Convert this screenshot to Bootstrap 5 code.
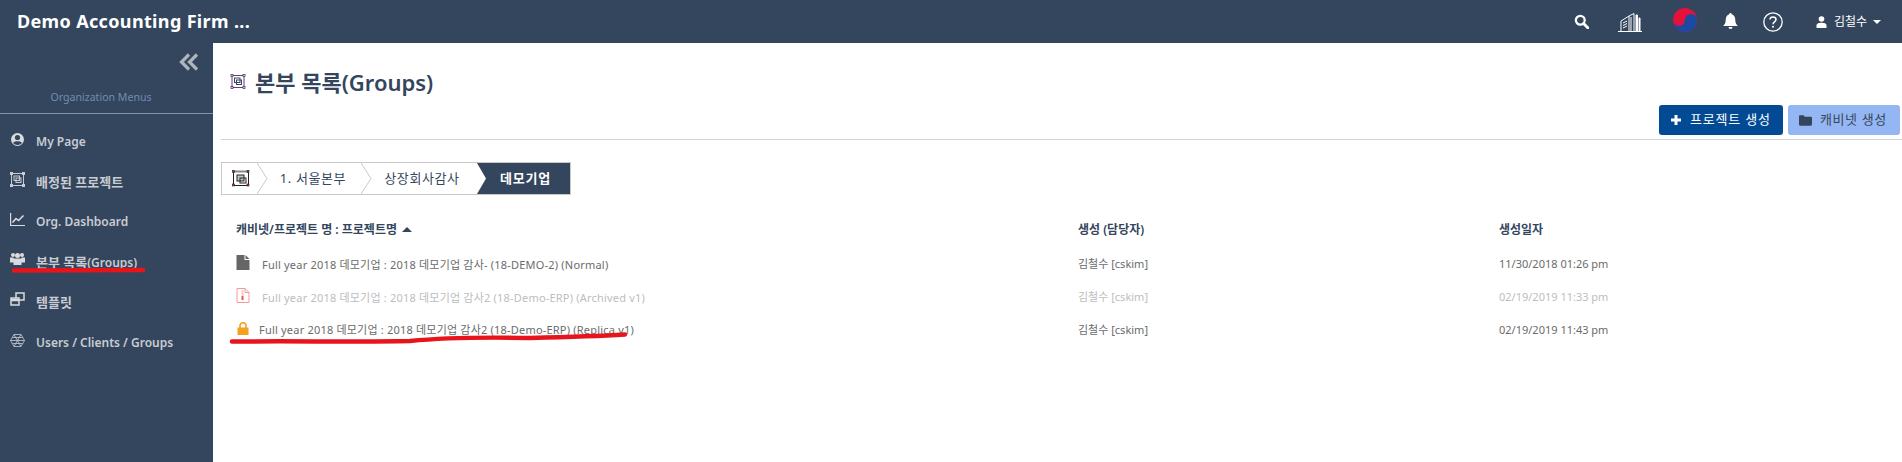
<!DOCTYPE html>
<html lang="ko">
<head>
<meta charset="utf-8">
<title>본부 목록</title>
<link href="https://cdn.jsdelivr.net/npm/bootstrap@5.3.0/dist/css/bootstrap.min.css" rel="stylesheet">
<style>
html,body{height:100%;overflow:hidden}
body{font-family:"Noto Sans","Noto Sans CJK KR",sans-serif;font-size:11px;color:#34465d;background:#fff}
.shell{height:462px;position:relative}
.topbar{height:43px;background:#34465d;color:#fff;padding:0 21px 0 17px}
.brand{font-size:18px;font-weight:700;letter-spacing:.35px}
.tool{display:flex;align-items:center;justify-content:center}
.tool-search{width:16px;margin-right:28px}
.tool-city{width:24px;margin-right:31px}
.tool-flag{width:24px;margin-right:26px;margin-bottom:4px}
.tool-bell{width:16px;margin-right:24px}
.tool-help{width:20px;margin-right:33px}
.user-name{font-size:12px;margin-left:7px}
.caret-down{width:0;height:0;border-left:4.5px solid transparent;border-right:4.5px solid transparent;border-top:4.5px solid #fff;margin-left:6px}
.body-row{height:419px}
.side{width:213px;background:#34465d;flex:none}
.collapse-btn{height:41px;padding:10px 14px 0 0;text-align:right}
.collapse-btn svg{display:block;margin-left:auto}
.menu-title{height:30px;border-bottom:1px solid #8093ad;color:#6f8cb3;font-size:10.6px;text-align:center;padding:6px 11px 0 0}
.side-list{padding-top:8px}
.side-item{height:40.2px;display:flex;align-items:center;color:#c8ccd2;font-size:12px;font-weight:600;padding-left:10px;text-decoration:none}
.side-item svg{width:15px;height:15px;margin-right:11px;flex:none;position:relative;top:-3px}
.side-ko{font-size:13px}
.main{flex:1;padding:0 0 0 8px;min-width:0}
.page-head{height:53px;padding:24px 0 0 9px;font-size:22px;font-weight:600;line-height:24px}
.page-head svg{margin-right:9px}
.btn-row{height:44px;border-bottom:1px solid #cdd3da;gap:5px;padding:9px 2px 0 0;box-sizing:border-box}
.act{height:30px;border-radius:3px;font-size:13px;padding:0 11px;display:flex;align-items:center;gap:8px;border:0;letter-spacing:.8px;white-space:nowrap}
.act-main{background:#024a94;color:#fff;width:124px}
.act-sub{background:#94b6f3;color:#34465d;width:112px;letter-spacing:.6px}
.crumbs{margin-top:22px;height:33px;width:350px;border:1px solid #c9c9c9;display:flex;font-size:13px;background:#fff;letter-spacing:.6px}
.crumb{position:relative;display:flex;align-items:center;justify-content:center;color:#34465d}
.crumb-sep{position:absolute;right:-11px;top:0;z-index:2}
.c0{width:35px;justify-content:flex-start;padding-left:10px}
.c1{width:104px;padding-left:8px}
.c2{width:116px;padding-left:6px}
.c3{flex:1;background:#34465d;color:#fff;font-weight:700;letter-spacing:.8px;padding-left:4px}
.c3 svg{position:absolute;left:0;top:0}
.grid-wrap{margin-top:17px;padding-left:15px}
.list-table{table-layout:fixed;width:100%;margin:0;font-size:11px;color:#666;--bs-table-bg:transparent}
.list-table th{font-weight:600;font-size:12px;color:#34465d;padding:0;height:35.5px;border:0;background:transparent;vertical-align:middle}
.list-table td{padding:0;height:33px;border:0;background:transparent;vertical-align:middle;color:inherit}
.w1{width:842px}.w2{width:421px}
.sort-up{display:inline-block;width:0;height:0;border-left:5px solid transparent;border-right:5px solid transparent;border-bottom:5px solid #34465d;margin-left:5px;vertical-align:2px}
.row-icon{display:inline-block;width:14px;vertical-align:-1px}
.txt-a{margin-left:12px;letter-spacing:.2px}
.txt-b{margin-left:9px;letter-spacing:.2px}
.row-faded td{color:#bdbdbd}
.row-normal td{color:#6b6b6b}
.ink{position:absolute;left:0;top:0;pointer-events:none;z-index:5}
</style>
</head>
<body>
<div class="shell">
  <header class="topbar d-flex align-items-center justify-content-between">
    <div class="brand">Demo Accounting Firm ...</div>
    <div class="d-flex align-items-center">
      <span class="tool tool-search"><svg width="15" height="15" viewBox="0 0 16 16"><circle cx="6.7" cy="6.7" r="4.7" fill="none" stroke="#fff" stroke-width="2.4"/><path d="M10.2 10.2 15 15" stroke="#fff" stroke-width="3" stroke-linecap="round"/></svg></span>
      <span class="tool tool-city"><svg width="24" height="20" viewBox="0 0 24 20" fill="none" stroke="#fff" stroke-width="1"><path d="M0 19.5h24"/><path d="M3 19V9l8-5v15M5 11l4-2M5 13.5l4-2M5 16l4-2"/><path d="M11 4l5-2.500V19M13 5v14"/><path d="M18 3h1.500v16H18zM21 6h1v13h-1z" fill="#fff"/></svg></span>
      <span class="tool tool-flag"><svg width="24" height="24" viewBox="0 0 24 24"><circle cx="12" cy="12" r="12" fill="#e4113a"/><path d="M0 12a6 6 0 0 0 12 0 6 6 0 0 1 12 0 12 12 0 0 1-24 0z" fill="#1b4aa3"/></svg></span>
      <span class="tool tool-bell"><svg width="15" height="17" viewBox="0 0 15 17"><path d="M7.500 0c.8 0 1.200.6 1.200 1.300C11 2 12.300 4 12.300 7c0 3 1 4.500 2.500 6H.2C1.700 11.500 2.700 10 2.700 7c0-3 1.300-5 3.600-5.700C6.300.6 6.700 0 7.500 0zM5.500 14h4a2 2 0 0 1-4 0z" fill="#fff"/></svg></span>
      <span class="tool tool-help"><svg width="20" height="20" viewBox="0 0 20 20"><circle cx="10" cy="10" r="9.200" fill="none" stroke="#fff" stroke-width="1.300"/><path d="M7 7.600C7 5.800 8.300 5 10 5s3 1 3 2.500c0 2.300-3 2.300-3 4.700" fill="none" stroke="#fff" stroke-width="1.500"/><circle cx="10" cy="14.700" r="1" fill="#fff"/></svg></span>
      <span class="d-flex align-items-center">
        <svg width="11" height="12" viewBox="0 0 11 12"><circle cx="5.500" cy="3" r="2.800" fill="#fff"/><path d="M.5 12V9.500C.5 7.500 3 6.800 5.500 6.800s5 .7 5 2.700V12z" fill="#fff"/></svg>
        <span class="user-name">김철수</span><span class="caret-down"></span>
      </span>
    </div>
  </header>
  <div class="body-row d-flex">
    <aside class="side">
      <div class="collapse-btn"><svg width="20" height="18" viewBox="0 0 20 18" fill="none" stroke="#adb5bd" stroke-width="3.200"><path d="M10 1.500 2.500 9l7.500 7.500M18 1.500 10.500 9l7.500 7.500"/></svg></div>
      <div class="menu-title">Organization Menus</div>
      <nav class="side-list">
        <a class="side-item"><svg viewBox="0 0 15 15"><circle cx="7.500" cy="7.500" r="6.500" fill="#d9dbde"/><circle cx="7.500" cy="5.500" r="2.600" fill="#34465d"/><path d="M3 11c1-2.200 8-2.200 9 0a6 6 0 0 1-9 0z" fill="#34465d"/></svg><span>My Page</span></a>
        <a class="side-item"><svg viewBox="0 0 15 15" fill="none" stroke="#c8ccd2"><path d="M2 1.500h11M2 13.500h11M1.500 2v11M13.500 2v11"/><rect x="4" y="4" width="5.500" height="4.500"/><rect x="6" y="6" width="5" height="4.500"/><g fill="#c8ccd2"><rect x=".5" y=".5" width="2" height="2"/><rect x="12.500" y=".5" width="2" height="2"/><rect x=".5" y="12.500" width="2" height="2"/><rect x="12.500" y="12.500" width="2" height="2"/></g></svg><span class="side-ko">배정된 프로젝트</span></a>
        <a class="side-item"><svg viewBox="0 0 15 15" fill="none" stroke="#d9dbde" stroke-width="1.200"><path d="M.6 1v12.500H15"/><path d="M2.500 10.500 6 6.500l2.500 2L13.500 3.500" stroke-width="1.600"/></svg><span>Org. Dashboard</span></a>
        <a class="side-item"><svg viewBox="0 0 15 15" fill="#d9dbde"><circle cx="3" cy="3" r="2"/><circle cx="12" cy="3" r="2"/><circle cx="7.500" cy="3.500" r="2.500"/><path d="M0 5.500h3.500v5H0zM11.500 5.500H15v5h-3.500zM3.500 6.500h8V13h-8z"/></svg><span><span class="side-ko">본부 목록</span>(Groups)</span></a>
        <a class="side-item"><svg viewBox="0 0 15 15" fill="none" stroke="#d9dbde" stroke-width="1.500"><rect x="6" y="1" width="8" height="7"/><rect x="1" y="6" width="8" height="7" fill="#34465d"/><path d="M1 8h8" stroke-width="2.500"/></svg><span class="side-ko">템플릿</span></a>
        <a class="side-item"><svg viewBox="0 0 15 15" fill="none" stroke="#c8ccd2" stroke-width=".8"><path d="M4 1.500h7l3.500 6-3.500 6H4L.5 7.500z"/><path d="M.5 7.500h14M4 1.500l7 12M11 1.500l-7 12M2.500 4.500h10M2.500 10.500h10"/></svg><span>Users / Clients / Groups</span></a>
      </nav>
    </aside>
    <main class="main">
      <div class="page-head d-flex align-items-center">
        <svg width="16" height="15" viewBox="0 0 15 15" fill="none" stroke="#34465d"><path d="M1.500 1.500h12v12h-12z" stroke="#7b2d8e"/><rect x="4" y="4" width="5.500" height="4.500"/><rect x="6" y="6" width="5" height="4.500"/><g fill="#fff" stroke="#34465d" stroke-width=".8"><rect x=".5" y=".5" width="2" height="2"/><rect x="12.500" y=".5" width="2" height="2"/><rect x=".5" y="12.500" width="2" height="2"/><rect x="12.500" y="12.500" width="2" height="2"/></g></svg>
        <span>본부 목록(Groups)</span>
      </div>
      <div class="btn-row d-flex justify-content-end align-items-start">
        <button class="act act-main" type="button"><svg width="12" height="12" viewBox="0 0 12 12"><path d="M4.500 1h3v3.500H11v3H7.500V11h-3V7.500H1v-3h3.500z" fill="#fff"/></svg>프로젝트 생성</button>
        <button class="act act-sub" type="button"><svg width="13" height="11" viewBox="0 0 13 11"><path d="M0 1.500C0 .7.500.2 1.200.2h3.300l1.300 1.600h6c.7 0 1.200.5 1.200 1.200v6.500c0 .7-.5 1.200-1.200 1.200H1.200C.5 10.700 0 10.200 0 9.500z" fill="#34465d"/></svg>캐비넷 생성</button>
      </div>
      <div class="crumbs">
        <div class="crumb c0"><svg width="18" height="17" viewBox="0 0 18 17" fill="none" stroke="#222"><rect x="1.500" y="1.500" width="15" height="14"/><path d="M1.500 1.500h15" stroke="#888" stroke-width="2"/><rect x="5" y="5" width="7" height="6" fill="#bfc6cc"/><rect x="8" y="8" width="6" height="5"/><g fill="#b2324b" stroke="#222" stroke-width=".6"><rect x=".5" y=".5" width="2" height="2"/><rect x="15" y=".5" width="2" height="2"/><rect x=".5" y="14" width="2" height="2"/><rect x="15" y="14" width="2" height="2"/></g></svg>
          <svg class="crumb-sep" width="11" height="31" viewBox="0 0 11 31"><path d="M0 0 10 15.500 0 31" fill="#fff" stroke="#c9c9c9"/></svg></div>
        <div class="crumb c1">1. 서울본부<svg class="crumb-sep" width="11" height="31" viewBox="0 0 11 31"><path d="M0 0 10 15.500 0 31" fill="#fff" stroke="#c9c9c9"/></svg></div>
        <div class="crumb c2">상장회사감사</div>
        <div class="crumb c3"><svg width="10" height="31" viewBox="0 0 10 31"><path d="M0 0 9 15.500 0 31z" fill="#fff"/></svg>데모기업</div>
      </div>
      <div class="grid-wrap">
        <table class="table list-table">
          <colgroup><col class="w1"><col class="w2"><col></colgroup>
          <thead><tr><th>캐비넷/프로젝트 명 : 프로젝트명<span class="sort-up"></span></th><th>생성 (담당자)</th><th>생성일자</th></tr></thead>
          <tbody>
            <tr class="row-normal"><td><svg class="row-icon" width="13" height="15" viewBox="0 0 13 15"><path d="M0 0h8v5h5v10H0zM9 0l4 4H9z" fill="#666"/></svg><span class="txt-a">Full year 2018 데모기업 : 2018 데모기업 감사- (18-DEMO-2) (Normal)</span></td><td>김철수 [cskim]</td><td>11/30/2018 01:26 pm</td></tr>
            <tr class="row-faded"><td><svg class="row-icon" width="13" height="15" viewBox="0 0 13 15" fill="none" stroke="#f29a9a"><path d="M.5.500h8l4 4v10H.5zM8.500.5v4h4"/><path d="M5 3h2M5 5h2M5 7h2"/><path d="M6 8v4" stroke="#e05a5a" stroke-width="2"/></svg><span class="txt-a">Full year 2018 데모기업 : 2018 데모기업 감사2 (18-Demo-ERP) (Archived v1)</span></td><td>김철수 [cskim]</td><td>02/19/2019 11:33 pm</td></tr>
            <tr class="row-normal"><td><svg class="row-icon" width="11" height="13" viewBox="0 0 11 13"><path d="M2.500 6V3.800a3 3 0 0 1 6 0V6" fill="none" stroke="#f5a01e" stroke-width="1.600"/><rect x="0" y="5.500" width="11" height="7.500" fill="#f5a01e"/></svg><span class="txt-b">Full year 2018 데모기업 : 2018 데모기업 감사2 (18-Demo-ERP) (Replica v1)</span></td><td>김철수 [cskim]</td><td>02/19/2019 11:43 pm</td></tr>
          </tbody>
        </table>
      </div>
    </main>
  </div>
  <svg class="ink" width="1902" height="462" viewBox="0 0 1902 462" fill="none" stroke="#e8141c" stroke-linecap="round" stroke-width="4.500"><path d="M14 270.500 143 270"/><path d="M232 341.500C300 341 360 342 410 341 440 338 480 337 530 338 570 337 600 336 625 334.500"/></svg>
</div>
<script src="https://cdn.jsdelivr.net/npm/bootstrap@5.3.0/dist/js/bootstrap.bundle.min.js"></script>
</body>
</html>
